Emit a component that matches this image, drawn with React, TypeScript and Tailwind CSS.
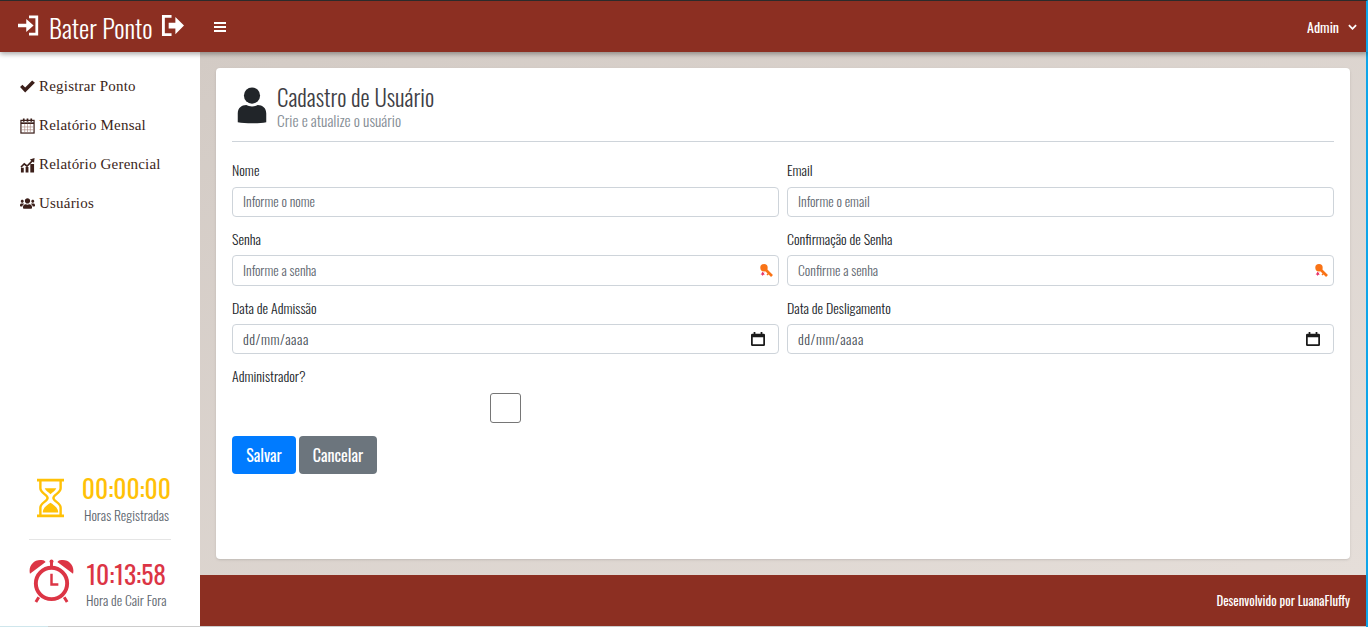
import { FaUsers } from "react-icons/fa";

const narrow = "font-['Oswald','Liberation_Sans_Narrow','Liberation_Sans',sans-serif]";

function LoginIcon() {
    return (
        <svg viewBox="0 0 24 24" className="w-[22px] h-[23px] -mt-[2px]" fill="#fff">
            <path d="M0 10h9V5l8 7-8 7v-5H0z" />
            <path d="M12 1h10v22H12v-3h7V4h-7z" />
        </svg>
    );
}

function LogoutIcon() {
    return (
        <svg viewBox="0 0 24 24" className="w-[23px] h-[23px] -mt-[2px]" fill="#fff">
            <path d="M1 1h10v3H4v16h7v3H1z" />
            <path d="M8 9h7V3l9 9-9 9v-6H8z" />
        </svg>
    );
}

function CheckIcon() {
    return (
        <svg viewBox="0 0 16 14" className="w-[15px] h-[13px]" fill="#3b1f1a">
            <path d="M0 7.500 2.500 5l3 3L13 .5 16 3 5.500 13.500z" />
        </svg>
    );
}

function CalendarSmall() {
    return (
        <svg viewBox="0 0 16 17" className="w-[15px] h-[16px]" fill="none" stroke="#3b1f1a">
            <rect x="1" y="2.500" width="14" height="13.500" strokeWidth="1.300" />
            <path d="M1 5.500h14" strokeWidth="1.800" />
            <path d="M4 .5v3.500M8 .5v3.500M12 .5v3.500" strokeWidth="1.800" />
            <path d="M5 6v9.500M8 6v9.500M11 6v9.500M1 9.500h14M1 12.500h14" strokeWidth=".6" stroke="#a07a70" />
        </svg>
    );
}

function ChartIcon() {
    return (
        <svg viewBox="0 0 16 16" className="w-[16px] h-[16px]" fill="#3b1f1a">
            <path d="M1 11h3v5H1zM6 10h3v6H6zM11 7h4v9h-4z" />
            <path d="M.5 9.500l4-4 3 2.500L12 3.500 10.500 2l5-1.500-.5 5L13.500 4.500 7.500 10.500l-3-2.500-3 3z" />
        </svg>
    );
}

function UserIcon() {
    return (
        <svg viewBox="0 0 30 40" className="w-[30px] h-[38px] mt-[2px]" fill="#212529">
            <circle cx="15" cy="9" r="8.500" />
            <path d="M0 37V28c0-6 4-9 9-9 3 2 9 2 12 0 5 0 9 3 9 9v9c-8 1.500-22 1.500-30 0z" />
        </svg>
    );
}

function KeyIcon() {
    return (
        <svg viewBox="0 0 14 14" className="w-[14px] h-[14px]">
            <circle cx="5" cy="3.800" r="3.700" fill="#f97316" />
            <path d="M6 5l7 7" stroke="#f97316" strokeWidth="2.600" />
            <path d="M10 9l-2 2" stroke="#f97316" strokeWidth="1.500" />
            <path d="M3.500 7.500l.7 1.300 1.300-.3-.6 1.300.9 1-1.400 0-.9 1.200-.5-1.300-1.400-.4 1-.9z" fill="#e8356b" />
        </svg>
    );
}

function DateIcon() {
    return (
        <svg viewBox="0 0 16 16" className="w-[14px] h-[14px]" fill="#1a1a1a">
            <path d="M3 0h2v2h6V0h2v2h1.500A1.500 1.500 0 0 1 16 3.500v11a1.500 1.500 0 0 1-1.500 1.500h-13A1.500 1.500 0 0 1 0 14.500v-11A1.500 1.500 0 0 1 1.500 2H3zM2 6v8h12V6z" />
        </svg>
    );
}

function HourglassIcon() {
    return (
        <svg viewBox="0 0 28 40" className="w-[27px] h-[40px]">
            <path d="M0 1.500h28M0 38.500h28" stroke="#ffc107" strokeWidth="3" />
            <path d="M3.500 2v8c0 5 7.500 6.500 7.500 10s-7.500 5-7.500 10v8M24.500 2v8c0 5-7.500 6.500-7.500 10s7.500 5 7.500 10v8" fill="none" stroke="#ffc107" strokeWidth="2.500" />
            <path d="M8 10h12c-1 3-4 4-6 6-2-2-5-3-6-6zM6 35c0-5 5-8 8-10 3 2 8 5 8 10z" fill="#ffc107" />
        </svg>
    );
}

function AlarmIcon() {
    return (
        <svg viewBox="0 0 46 46" className="w-[45px] h-[45px] shrink-0 mb-[4px]">
            <path d="M1 15C-1 7 5 0 13 1c2 0 3 1 4 2zM45 15c2-8-4-15-12-14-2 0-3 1-4 2z" fill="#dc3545" />
            <circle cx="23" cy="25" r="16" fill="none" stroke="#dc3545" strokeWidth="4" />
            <path d="M23 2v6M10 39l-3 5M36 39l3 5" stroke="#dc3545" strokeWidth="3" />
            <circle cx="23" cy="2.500" r="2" fill="#dc3545" />
            <path d="M23 15v11h7" fill="none" stroke="#dc3545" strokeWidth="2.500" />
        </svg>
    );
}

const menu = [
    { label: "Registrar Ponto", icon: <CheckIcon /> },
    { label: "Relatório Mensal", icon: <CalendarSmall /> },
    { label: "Relatório Gerencial", icon: <ChartIcon /> },
    { label: "Usuários", icon: <FaUsers className="w-[17px] h-[17px] text-[#3b1f1a]" /> },
];

function Field({ label, placeholder, suffix, className, date, first }: { label: string; placeholder: string; suffix?: React.ReactNode; className?: string; date?: boolean; first?: boolean }) {
    return (
        <div>
            <label className="block h-[24px] leading-[24px] text-[14px] font-light text-[#212529]">{label}</label>
            <div className={`relative rounded border border-[#ced4da] bg-white flex items-center px-[10px] ${first ? "mt-[5px]" : "mt-[4px]"} ${date ? "" : "pb-[2px]"} ${className ?? "h-[31px]"}`}>
                <span className={`font-light leading-[26px] ${date ? "text-[14px] tracking-[0.5px] text-[#495057]" : "text-[13.7px] text-[#5f6871]"}`}>{placeholder}</span>
                {suffix && <span className={`absolute top-1/2 -translate-y-1/2 flex ${date ? "right-[13px]" : "right-[5px]"}`}>{suffix}</span>}
            </div>
        </div>
    );
}

export default function App() {
    return (
        <div className={`w-[1368px] h-[627px] overflow-hidden flex flex-col bg-white font-light ${narrow}`}>
            {/* Header */}
            <header className="relative z-10 h-[52px] shrink-0 flex items-center bg-[#8c2f22] border-t border-[#2b2b2b] shadow-[0_2px_5px_rgba(0,0,0,0.35)] text-white border-r-2 border-r-[#0ea5e9]">
                <div className="w-[200px] flex items-center pl-[18px] gap-[9px]">
                    <LoginIcon />
                    <span className="text-[25.8px] leading-none font-light mt-[2px] mr-[-1px]">Bater Ponto</span>
                    <LogoutIcon />
                </div>
                <div className="ml-[14px] flex flex-col gap-[2px]">
                    <span className="block w-[12px] h-[2px] bg-white" />
                    <span className="block w-[12px] h-[2px] bg-white" />
                    <span className="block w-[12px] h-[2px] bg-white" />
                </div>
                <div className="ml-auto mr-[9px] flex items-center gap-[9px]">
                    <span className="text-[14px] font-normal">Admin</span>
                    <svg viewBox="0 0 10 6" className="w-[9px] h-[6px]" fill="none" stroke="#fff" strokeWidth="2">
                        <path d="M1 1l4 4 4-4" />
                    </svg>
                </div>
            </header>

            <div className="flex flex-1 min-h-0">
                {/* Sidebar */}
                <aside className="w-[200px] shrink-0 flex flex-col bg-white">
                    <nav className="pt-[15px] pl-[20px] flex flex-col">
                        {menu.map((item) => (
                            <div key={item.label} className="h-[39px] flex items-center gap-[4px] font-['Liberation_Serif',serif] font-normal text-[15px] tracking-[0.2px] text-[#3b1f1a]">
                                <span className="w-[15px] flex justify-center">{item.icon}</span>
                                {item.label}
                            </div>
                        ))}
                    </nav>
                    <div className="mt-auto px-[29px] pb-[16px]">
                        <div className="flex items-center justify-end gap-[18px] pb-[14px] border-b border-[#e5e5e5]">
                            <HourglassIcon />
                            <div className="text-center whitespace-nowrap">
                                <div className="text-[25.5px] leading-[34px] font-normal text-[#ffc107]">00:00:00</div>
                                <div className="text-[13.7px] leading-[20px] font-light text-[#5f6871]">Horas Registradas</div>
                            </div>
                        </div>
                        <div className="flex items-center gap-[12px] pt-[17px]">
                            <AlarmIcon />
                            <div className="text-center whitespace-nowrap">
                                <div className="text-[25.5px] leading-[34px] font-normal text-[#dc3545]">10:13:58</div>
                                <div className="text-[13.7px] leading-[20px] -mt-px font-light text-[#5f6871]">Hora de Cair Fora</div>
                            </div>
                        </div>
                    </div>
                </aside>

                {/* Main */}
                <main className="flex-1 flex flex-col min-w-0 bg-gradient-to-br from-[#d3cbc5] to-[#e6dfda] border-r-2 border-r-[#0ea5e9]">
                    <div className="flex-1 p-[16px] flex">
                        <section className="flex-1 bg-white rounded-[4px] px-[16px] shadow-sm">
                            <div className="h-[74px] flex items-center border-b border-[#ced4da] pl-[5px] gap-[10px]">
                                <UserIcon />
                                <div className="pt-[2px]">
                                    <h1 className="text-[23px] leading-[28px] font-light text-[#3f3f46]">Cadastro de Usuário</h1>
                                    <p className="text-[15.4px] leading-[18px] font-light text-[#868e96]">Crie e atualize o usuário</p>
                                </div>
                            </div>
                            <form className="pt-[16px]">
                                <div className="grid grid-cols-2 gap-x-[8px] gap-y-[10px]">
                                    <Field label="Nome" placeholder="Informe o nome" className="h-[30px]" first />
                                    <Field label="Email" placeholder="Informe o email" className="h-[30px]" first />
                                    <Field label="Senha" placeholder="Informe a senha" suffix={<KeyIcon />} />
                                    <Field label="Confirmação de Senha" placeholder="Confirme a senha" suffix={<KeyIcon />} />
                                    <Field label="Data de Admissão" placeholder="dd/mm/aaaa" className="h-[30px]" suffix={<DateIcon />} date />
                                    <Field label="Data de Desligamento" placeholder="dd/mm/aaaa" className="h-[30px]" suffix={<DateIcon />} date />
                                </div>
                                <div className="w-[547px] mt-[10px]">
                                    <label className="block h-[24px] leading-[24px] text-[14px] font-light text-[#212529]">Administrador?</label>
                                    <div className="mt-[5px] ml-[258px] w-[31px] h-[30px] rounded-[3px] border border-[#767676] bg-white" />
                                </div>
                                <div className="mt-[13px] flex gap-[3px]">
                                    <button type="button" className="h-[38px] w-[64px] rounded bg-[#007bff] text-white text-[16px] font-normal">Salvar</button>
                                    <button type="button" className="h-[38px] w-[78px] rounded bg-[#6c757d] text-white text-[16px] font-normal">Cancelar</button>
                                </div>
                            </form>
                        </section>
                    </div>
                    <footer className="h-[51px] shrink-0 bg-[#8c2f22] flex items-center justify-end pr-[16px] text-white text-[12.8px] font-normal">
                        Desenvolvido por LuanaFluffy
                    </footer>
                </main>
            </div>
            <div className="h-px shrink-0 flex border-r-2 border-r-[#0ea5e9]">
                <div className="w-[48px] bg-[#cfe6ec]" />
                <div className="flex-1 bg-[#cccccc]" />
            </div>
        </div>
    );
}
